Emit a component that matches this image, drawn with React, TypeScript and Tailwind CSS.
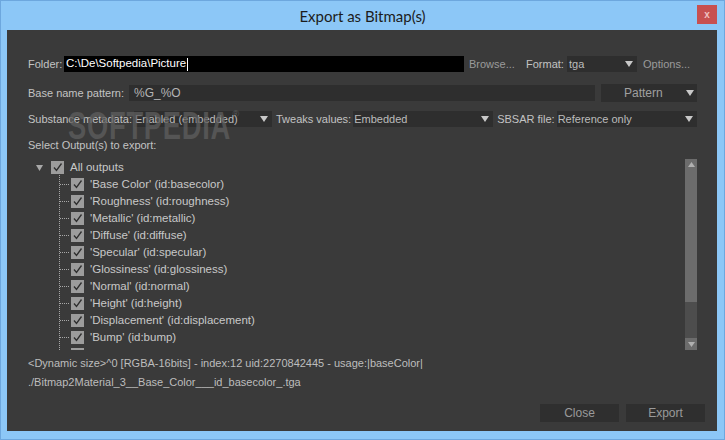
import React from 'react';

const outputs = [
  "'Base Color' (id:basecolor)",
  "'Roughness' (id:roughness)",
  "'Metallic' (id:metallic)",
  "'Diffuse' (id:diffuse)",
  "'Specular' (id:specular)",
  "'Glossiness' (id:glossiness)",
  "'Normal' (id:normal)",
  "'Height' (id:height)",
  "'Displacement' (id:displacement)",
  "'Bump' (id:bump)",
  "'Ambient Occlusion' (id:ambientocclusion)",
];

function Arrow() {
  return (
    <svg width="8" height="6" viewBox="0 0 8 6" className="shrink-0">
      <path d="M0 0 H8 L4 6 Z" fill="#c8c8c8" />
    </svg>
  );
}

function Check() {
  return (
    <div className="w-[13px] h-[13px] bg-[#9c9c9c] shrink-0 flex items-center justify-center">
      <svg width="11" height="11" viewBox="0 0 11 11">
        <path d="M2 5.5 L4.5 8.5 L9.5 1.5" stroke="#2e2e2e" strokeWidth="1.3" fill="none" />
      </svg>
    </div>
  );
}

function Select({ value, width, textPad = 'pl-[1px]' }: { value: string; width: string; textPad?: string }) {
  return (
    <div className={`${width} h-4 bg-[#2e2e2e] flex items-center justify-between ${textPad} pr-[4px] text-[#bcbcbc] whitespace-nowrap`}>
      <span>{value}</span>
      <Arrow />
    </div>
  );
}

export default function App() {
  return (
    <div className="w-[725px] h-[440px] bg-[#8cc7f7] border border-[#6da7de] flex flex-col overflow-hidden" style={{ fontFamily: '"Liberation Sans", Arial, sans-serif' }}>
      {/* Title bar */}
      <div className="h-[29px] relative flex items-center justify-center shrink-0">
        <span className="text-[15px] text-[#1c1c1c] pt-[2px]" style={{ fontFamily: 'Lato, "Liberation Sans", sans-serif' }}>Export as Bitmap(s)</span>
        <div className="absolute right-[7px] top-[4px] w-[20px] h-[19px] bg-[#c75050] flex items-center justify-center">
          <span className="text-[#f0c0c0] text-[10px] leading-none font-bold">x</span>
        </div>
      </div>

      {/* Content */}
      <div className="ml-[6px] mr-[7px] h-[401px] bg-[#3a3a3a] relative pl-[21px] pr-[20px] text-[11px] text-[#c3c3c3] flex flex-col whitespace-nowrap">
        {/* Folder row */}
        <div className="mt-[26px] h-4 flex items-center">
          <span className="w-[36px] shrink-0">Folder:</span>
          <div className="w-[400px] shrink-0 h-4 bg-black flex items-center pl-[2px] text-[11.5px] text-white">
            C:\De\Softpedia\Picture<span className="w-px h-[13px] bg-white ml-px" />
          </div>
          <span className="ml-[5px] w-[57px] shrink-0 text-[#9a9a9a]">Browse...</span>
          <span className="w-[41px] shrink-0">Format:</span>
          <Select value="tga" width="w-[70px] shrink-0" textPad="pl-[2px]" />
          <span className="ml-[6px] text-[#9a9a9a]">Options...</span>
        </div>

        {/* Base name row */}
        <div className="mt-[12px] h-[18px] flex items-center">
          <span className="w-[101px] shrink-0">Base name pattern:</span>
          <div className="w-[466px] shrink-0 h-4 bg-[#2e2e2e] flex items-center pl-[5px] text-[#b4b4b4] text-[12px]">%G_%O</div>
          <div className="ml-[6px] w-[96px] shrink-0 h-[18px] bg-[#2e2e2e] flex items-center justify-between pl-[23px] pr-[3px] text-[#a0a0a0] text-[12px]">
            <span>Pattern</span>
            <Arrow />
          </div>
        </div>

        {/* Substance row */}
        <div className="mt-[9px] h-4 flex items-center">
          <span className="shrink-0 mr-[2px]">Substance metadata:</span>
          <Select value="Enabled (embedded)" width="w-[138px] shrink-0" />
          <span className="ml-[4px] mr-[2px] shrink-0">Tweaks values:</span>
          <Select value="Embedded" width="w-[140px] shrink-0" />
          <span className="ml-[4px] mr-[2px] shrink-0">SBSAR file:</span>
          <Select value="Reference only" width="flex-1 min-w-0" />
        </div>

        <div className="mt-[12px] h-[13px] leading-[13px]">Select Output(s) to export:</div>

        {/* Tree */}
        <div className="mt-[7px] h-[191px] flex overflow-hidden relative">
          <div className="flex-1 relative text-[11.5px] text-[#c8c8c8]">
            <div className="absolute left-[31px] top-[16px] bottom-0 border-l border-dotted border-[#a8a8a8]" />
            <div className="h-[17px] flex items-center">
              <div className="w-[23px] flex justify-end pr-[8px]">
                <svg width="7" height="6" viewBox="0 0 7 6"><path d="M0 0 H7 L3.5 6 Z" fill="#a8a8a8" /></svg>
              </div>
              <Check />
              <span className="ml-[6px]">All outputs</span>
            </div>
            {outputs.map((o) => (
              <div key={o} className="h-[17px] flex items-center">
                <div className="ml-[32px] w-[9px] mr-[2px] border-t border-dotted border-[#a8a8a8]" />
                <Check />
                <span className="ml-[6px]">{o}</span>
              </div>
            ))}
          </div>
          <div className="w-[12px] flex flex-col -mt-px">
            <div className="h-[144px] bg-[#6c6c6c] flex justify-center pt-[4px]">
              <svg width="7" height="5" viewBox="0 0 7 5"><path d="M3.5 0 L7 5 H0 Z" fill="#b0b0b0" /></svg>
            </div>
            <div className="h-[36px] bg-[#4d4d4d]" />
            <div className="h-[12px] bg-[#6c6c6c] flex justify-center items-center">
              <svg width="7" height="5" viewBox="0 0 7 5"><path d="M0 0 H7 L3.5 5 Z" fill="#b0b0b0" /></svg>
            </div>
          </div>
        </div>

        {/* Status */}
        <div className="mt-[6px] h-[14px] leading-[14px] text-[11px] text-[#bdbdbd]">
          &lt;Dynamic size&gt;^0 [RGBA-16bits] - index:12 uid:2270842445 - usage:|baseColor|
        </div>
        <div className="mt-[5px] h-[14px] leading-[14px] text-[11px] text-[#bdbdbd]">
          ./Bitmap2Material_3__Base_Color___id_basecolor_.tga
        </div>

        {/* Buttons */}
        <div className="mt-[15px] flex justify-end gap-[7px] mr-[-8px]">
          <div className="w-[79px] h-[18px] bg-[#2f2f2f] flex items-center justify-center text-[12px] text-[#9a9a9a]">Close</div>
          <div className="w-[79px] h-[18px] bg-[#2f2f2f] flex items-center justify-center text-[12px] text-[#9a9a9a]">Export</div>
        </div>

        {/* Watermark */}
        <div className="absolute left-[61px] top-[77px] pointer-events-none flex items-start">
          <span className="inline-block text-[38px] font-bold leading-none text-[#5e5e5e] opacity-75 origin-left scale-x-[0.72] tracking-[1px]">SOFTPEDIA</span>
          <span className="text-[9px] text-[#6e6e6e] opacity-70 -ml-[62px] mt-[1px]">®</span>
        </div>
      </div>
    </div>
  );
}
